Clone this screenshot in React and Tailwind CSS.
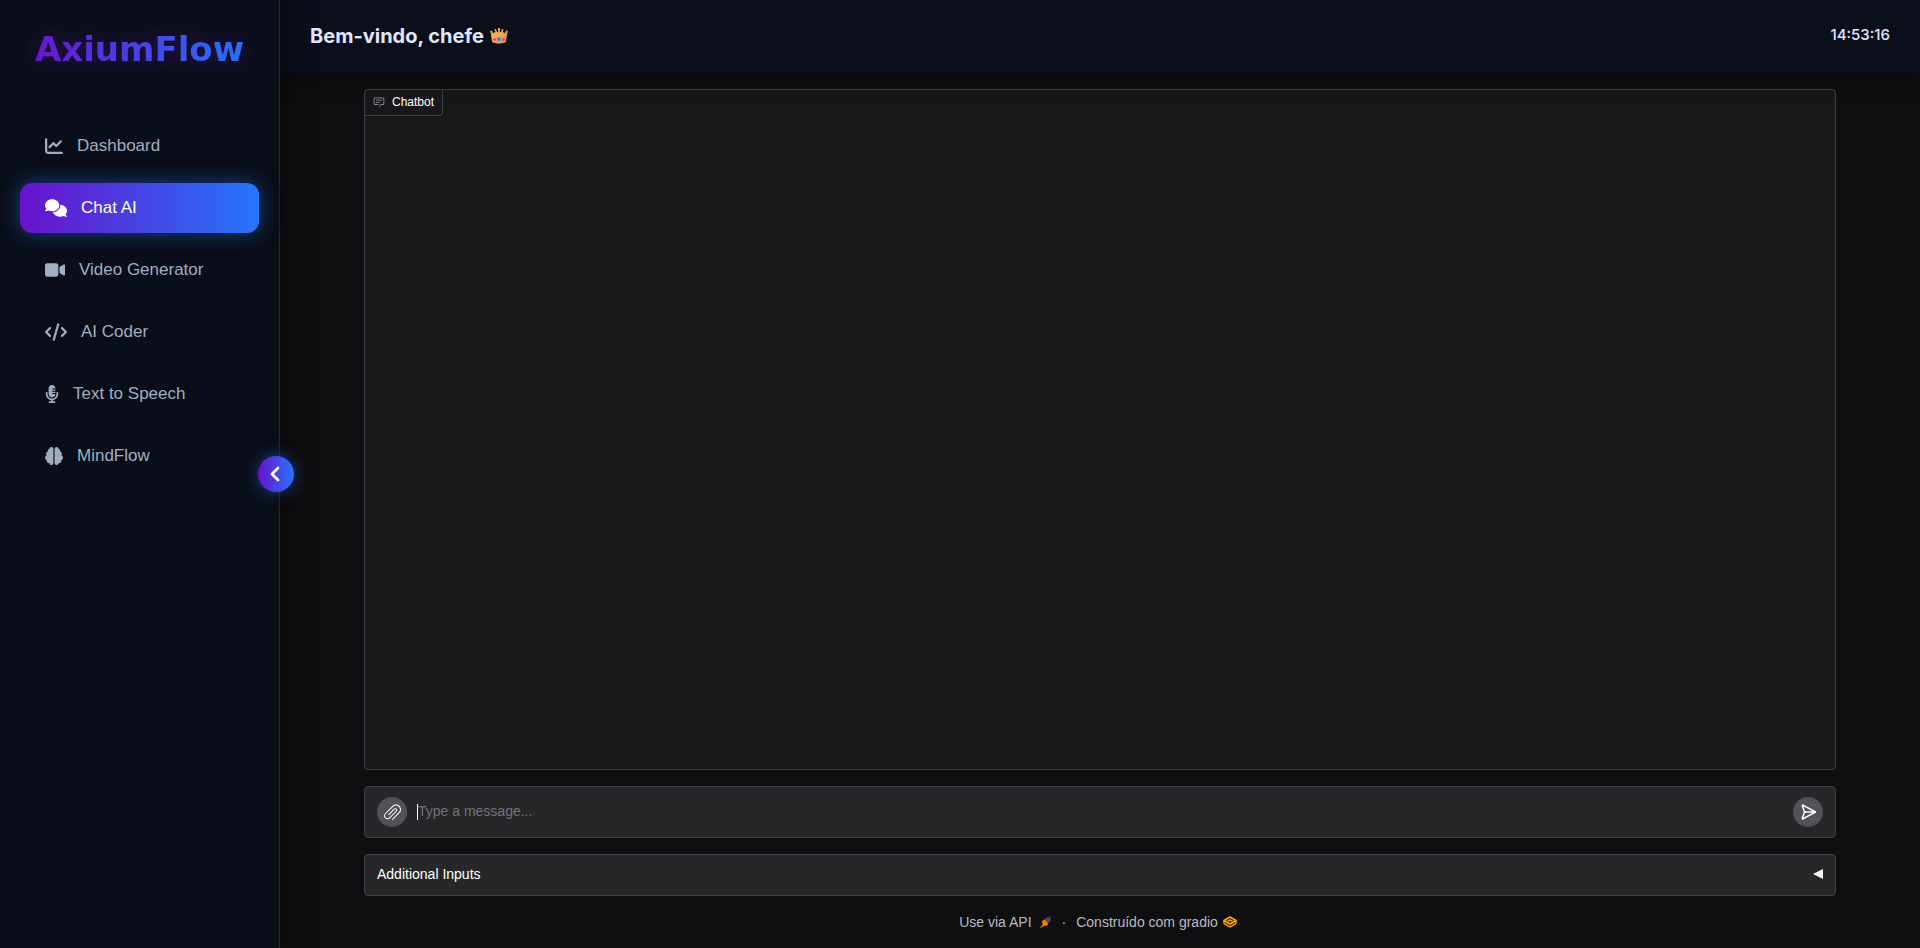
import {
  FaChartLine,
  FaComments,
  FaVideo,
  FaCode,
  FaMicrophoneLines,
  FaBrain,
} from "react-icons/fa6";

const NAV = [
  { label: "Dashboard", Icon: FaChartLine, size: "w-[18px]" },
  { label: "Chat AI", Icon: FaComments, size: "w-[22px]", active: true },
  { label: "Video Generator", Icon: FaVideo, size: "w-[20px]" },
  { label: "AI Coder", Icon: FaCode, size: "w-[22px]" },
  { label: "Text to Speech", Icon: FaMicrophoneLines, size: "w-[14px]" },
  { label: "MindFlow", Icon: FaBrain, size: "w-[18px]" },
];

function Crown() {
  return (
    <svg viewBox="0 0 36 32" className="h-4 w-[18px]" aria-hidden="true">
      <defs>
        <linearGradient id="crown" x1="0" y1="0" x2="1" y2="1">
          <stop offset="0" stopColor="#ffc25e" />
          <stop offset="0.55" stopColor="#f3a157" />
          <stop offset="1" stopColor="#dd7b52" />
        </linearGradient>
      </defs>
      <path
        d="M2 8l6 3 4-5 4 4 2-7 2 7 4-4 4 5 6-3-3 20q-13 5-26 0z"
        fill="url(#crown)"
        stroke="#f0a554"
        strokeWidth="1.500"
        strokeLinejoin="round"
      />
      <g fill="#ffb636">
        <circle cx="2.500" cy="7" r="2" />
        <circle cx="11" cy="4" r="2" />
        <circle cx="18" cy="2.500" r="2.300" />
        <circle cx="25" cy="4" r="2" />
        <circle cx="33.500" cy="7" r="2" />
      </g>
      <circle cx="18" cy="22" r="4" fill="#3388f5" />
      <circle cx="9" cy="23" r="2.400" fill="#f0305e" />
      <circle cx="27" cy="23" r="2.400" fill="#f0305e" />
    </svg>
  );
}

function ChatIcon() {
  return (
    <svg viewBox="0 0 32 32" className="size-3" fill="#a1a1aa" aria-hidden="true">
      <path d="M17.740 30L16 29l4-7h6a2 2 0 0 0 2-2V8a2 2 0 0 0-2-2H6a2 2 0 0 0-2 2v12a2 2 0 0 0 2 2h9v2H6a4 4 0 0 1-4-4V8a4 4 0 0 1 4-4h20a4 4 0 0 1 4 4v12a4 4 0 0 1-4 4h-4.840Z" />
      <path d="M8 10h16v2H8zm0 6h10v2H8z" />
    </svg>
  );
}

function Paperclip() {
  return (
    <svg viewBox="0 0 1920 1920" className="size-[17px]" fill="#ffffff" aria-hidden="true">
      <path
        fillRule="evenodd"
        d="M1752.768 221.109C1532.646.986 1174.283.986 954.161 221.109l-838.588 838.588c-154.052 154.165-154.052 404.894 0 558.946 149.534 149.421 409.976 149.308 559.059 0l758.738-758.626c87.982-88.094 87.982-231.417 0-319.510-88.320-88.208-231.642-87.982-319.510 0l-638.796 638.908 79.850 79.849 638.795-638.908c43.934-43.821 115.539-43.934 159.812 0 43.934 44.047 43.934 115.877 0 159.812l-758.739 758.625c-110.230 110.118-289.355 110.005-399.360 0-110.118-110.117-110.005-289.242 0-399.247l838.588-838.588c175.963-175.962 462.382-176.188 638.909 0 176.075 176.188 176.075 462.721 0 638.909l-798.607 798.720 79.849 79.850 798.607-798.720c220.010-220.123 220.010-578.485 0-798.607"
      />
    </svg>
  );
}

function SendIcon() {
  return (
    <svg
      viewBox="0 0 16 16"
      className="size-4"
      fill="none"
      stroke="#ffffff"
      strokeWidth="1.500"
      strokeLinejoin="round"
      strokeLinecap="round"
      aria-hidden="true"
    >
      <path d="M3.300 1.300Q2 .7 2.400 2.100L4.600 8 2.400 13.900Q2 15.300 3.300 14.700L15.600 8z" />
      <path d="M4.600 8H15" />
    </svg>
  );
}

function ChevronLeft() {
  return (
    <svg
      viewBox="0 0 10 16"
      className="h-4 w-[10px]"
      fill="none"
      stroke="currentColor"
      strokeWidth="2.700"
      strokeLinecap="round"
      strokeLinejoin="round"
      aria-hidden="true"
    >
      <path d="M8 2L2 8l6 6" />
    </svg>
  );
}

function Rocket() {
  return (
    <svg viewBox="0 0 24 24" className="size-3" aria-hidden="true">
      <path d="M9 7l5-4 8-2-1 8-5 6-2 3-8-8z" fill="#454c5c" />
      <path d="M15 2l7-1-1 7z" fill="#343b49" />
      <path d="M4 10l5-3 7 8-2 5-4-1-7 4 2-6z" fill="#ff7c00" />
      <path d="M0 24l2-6 5 4z" fill="#a85000" />
    </svg>
  );
}

function GradioMark() {
  return (
    <svg
      viewBox="0 0 28 24"
      className="h-3 w-[14px]"
      fill="none"
      strokeWidth="3"
      strokeLinejoin="round"
      aria-hidden="true"
    >
      <path d="M2 15l12 7 12-7" stroke="#ff8a00" />
      <path d="M14 2L26 9 14 16 2 9z" stroke="#ffb000" />
      <path d="M2 9v6M26 9v6" stroke="#ffa000" />
      <path d="M9 10.500l5-2.500 5 2.500" stroke="#ff9500" />
    </svg>
  );
}

function Sidebar() {
  return (
    <aside className="relative z-20 flex w-[280px] shrink-0 flex-col border-r border-[#22242f] bg-[#0a0e19] px-5 pt-[25px] shadow-[5px_0_25px_rgba(0,0,0,0.5)]">
      <div className="mb-[47px] flex h-[49px] items-center drop-shadow-[0_0_10px_rgba(106,17,203,0.4)]">
        <span className="flex-1 bg-linear-to-r/srgb from-[#6a11cb] to-[#2575fc] bg-clip-text text-center font-['DejaVu_Sans',sans-serif] text-[34px] font-bold text-transparent">
          AxiumFlow
        </span>
      </div>
      <nav className="flex flex-col gap-3">
        {NAV.map(({ label, Icon, size, active }) => (
          <a
            key={label}
            href="#"
            aria-current={active ? "page" : undefined}
            className={
              active
                ? "flex h-[50px] items-center gap-[14px] rounded-xl bg-linear-to-r/srgb from-[#6a11cb] to-[#2575fc] px-[25px] text-[17px] text-white shadow-[0_0_20px_rgba(37,117,252,0.5)]"
                : "flex h-[50px] items-center gap-[14px] rounded-xl px-[25px] text-[17px] text-[#a0aec0]"
            }
          >
            <Icon className={`h-[18px] ${size}`} />
            {label}
          </a>
        ))}
      </nav>
      <button
        type="button"
        aria-label="Recolher menu"
        className="absolute top-1/2 -right-[15px] flex size-9 -translate-y-1/2 items-center justify-center rounded-full bg-linear-to-r/srgb from-[#6a11cb] to-[#2575fc] pr-0.5 text-white shadow-[0_0_15px_rgba(37,117,252,0.5)]"
      >
        <ChevronLeft />
      </button>
    </aside>
  );
}

export default function App() {
  return (
    <div className="flex min-h-screen bg-[#0f0f11] font-['Liberation_Sans',Arial,sans-serif]">
      <Sidebar />
      <div className="flex min-w-0 flex-1 flex-col">
        <header className="z-10 flex h-[73px] items-center justify-between bg-[#0a0f1a] px-[30px] pb-0.5 font-[Inter,sans-serif] text-[#e0e6ff] shadow-[0_4px_20px_rgba(0,0,0,0.4)]">
          <h1 className="flex items-center gap-1.5 text-xl font-bold">
            Bem-vindo, chefe
            <Crown />
          </h1>
          <time className="text-[15px] font-medium">14:53:16</time>
        </header>
        <main className="mx-auto flex w-full max-w-[1536px] flex-1 flex-col gap-4 px-8 pt-4">
          <section
            aria-label="Chatbot"
            className="flex flex-1 items-start rounded border border-[#3f3f46] bg-[#18181b]"
          >
            <div className="flex h-[26px] items-center gap-[7px] rounded-br border-r border-b border-[#3f3f46] px-2 pb-0.5 text-xs text-white">
              <ChatIcon />
              Chatbot
            </div>
          </section>
          <form className="flex h-[52px] items-center rounded border border-[#3f3f46] bg-[#27272a] px-3">
            <button
              type="button"
              aria-label="Attach file"
              className="mr-[10px] flex size-[30px] shrink-0 items-center justify-center rounded-full bg-[#52525b]"
            >
              <Paperclip />
            </button>
            <span className="h-4 w-px shrink-0 bg-white" />
            <input
              type="text"
              aria-label="Message"
              placeholder="Type a message..."
              className="min-w-0 flex-1 bg-transparent pb-0.5 text-sm text-white outline-none placeholder:text-[#71717a]"
            />
            <button
              type="button"
              aria-label="Send"
              className="flex size-[30px] shrink-0 items-center justify-center rounded-full bg-[#52525b]"
            >
              <SendIcon />
            </button>
          </form>
          <button
            type="button"
            aria-expanded="false"
            className="flex h-[42px] items-center justify-between rounded border border-[#3f3f46] bg-[#27272a] px-3 pb-0.5 text-sm text-white"
          >
            Additional Inputs
            <svg viewBox="0 0 10 10" className="size-[10px]" fill="#f4f4f5" aria-hidden="true">
              <path d="M0 5L10 0V10z" />
            </svg>
          </button>
          <footer className="flex h-9 items-start justify-center gap-[10px] pr-1 text-sm text-[#bbbbc2]">
            <a href="#" className="flex items-center gap-2">
              Use via API <Rocket />
            </a>
            <span>·</span>
            <a href="#" className="flex items-center gap-[5px]">
              Construído com gradio <GradioMark />
            </a>
          </footer>
        </main>
      </div>
    </div>
  );
}
